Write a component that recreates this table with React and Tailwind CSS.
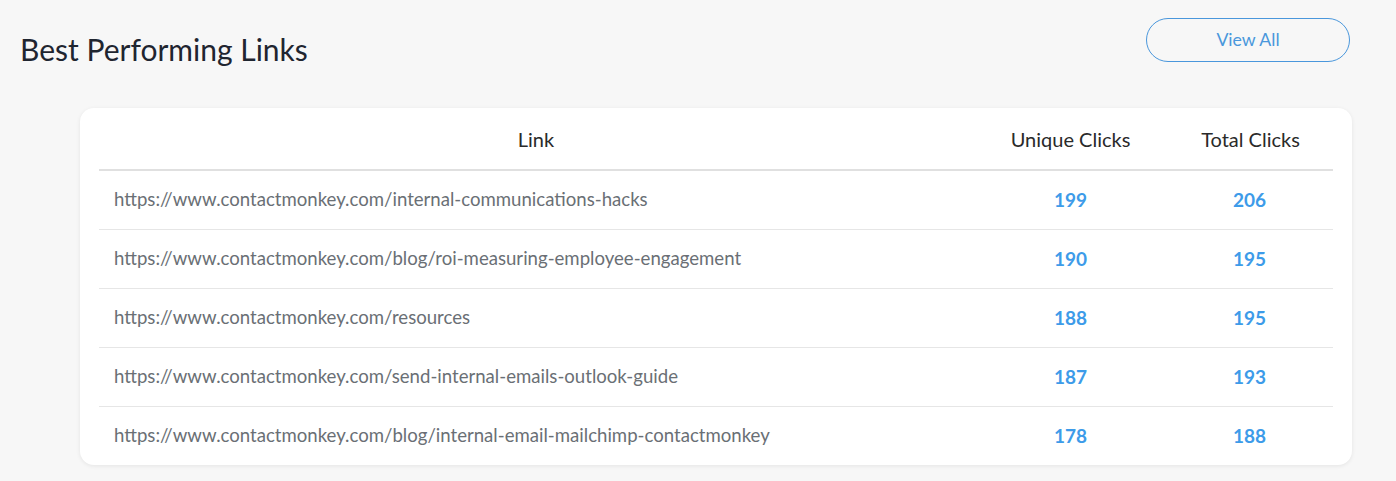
import React from "react";

const rows = [
  ["https://www.contactmonkey.com/internal-communications-hacks", 199, 206],
  ["https://www.contactmonkey.com/blog/roi-measuring-employee-engagement", 190, 195],
  ["https://www.contactmonkey.com/resources", 188, 195],
  ["https://www.contactmonkey.com/send-internal-emails-outlook-guide", 187, 193],
  ["https://www.contactmonkey.com/blog/internal-email-mailchimp-contactmonkey", 178, 188],
];

export default function App() {
  return (
    <div className="w-[1396px] h-[481px] bg-[#f7f7f7] font-['Lato',sans-serif] overflow-hidden">
      <div className="flex items-center justify-between pl-[20px] pr-[46px] pt-[18px] h-[62px]">
        <h1 className="text-[30px] leading-none text-[#1f2530] mt-[18px]">Best Performing Links</h1>
        <button className="w-[204px] h-[44px] rounded-full border border-[#4a97dc] text-[#4a97dc] text-[17.7px] leading-none">
          View All
        </button>
      </div>
      <div className="ml-[80px] mt-[46px] w-[1272px] h-[357px] bg-white rounded-[14px] shadow-[0_1px_4px_rgba(0,0,0,0.08)] px-[19px]">
        <div className="grid grid-cols-[874px_195px_165px] h-[63px] items-center border-b-2 border-[#e0e0e0] text-[20px] text-[#2a2a2a]">
          <div className="text-center">Link</div>
          <div className="text-center">Unique Clicks</div>
          <div className="text-center">Total Clicks</div>
        </div>
        {rows.map(([link, u, t], i) => (
          <div
            key={i}
            className={`grid grid-cols-[874px_195px_165px] items-center ${i < rows.length - 1 ? "h-[59px] border-b border-[#e6e6e6]" : "h-[58px]"}`}
          >
            <div className="pl-[15px] text-[18.6px] text-[#6a6f75]">{link}</div>
            <div className="text-center text-[19px] font-bold text-[#3d9be9]">{u}</div>
            <div className="text-center text-[19px] font-bold text-[#3d9be9] pr-[2px]">{t}</div>
          </div>
        ))}
      </div>
    </div>
  );
}
